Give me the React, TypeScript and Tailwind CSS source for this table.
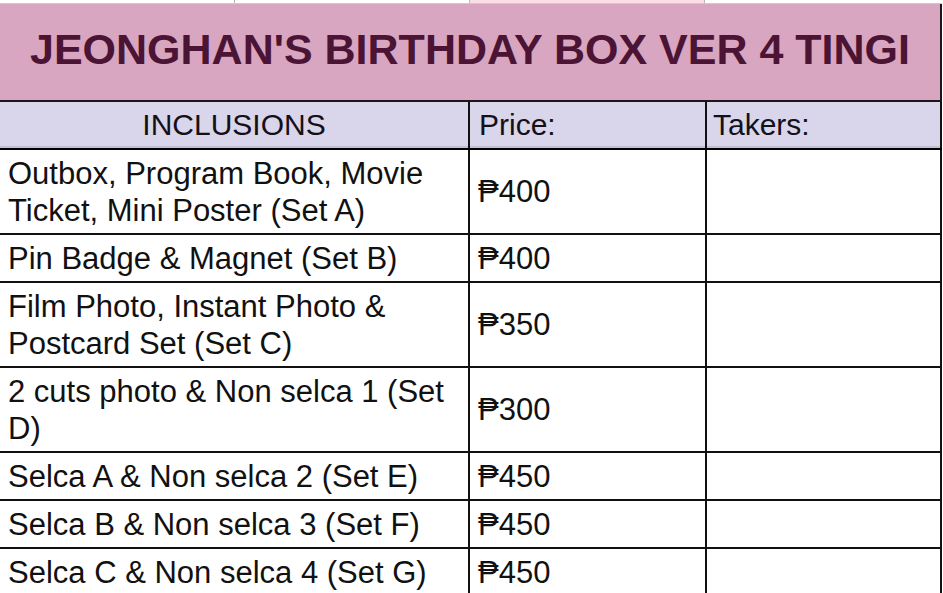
import React from "react";

const rows: { text: React.ReactNode; price: string }[] = [
  { text: <>Outbox, Program Book, Movie<br />Ticket, Mini Poster (Set A)</>, price: "₱400" },
  { text: <>Pin Badge &amp; Magnet (Set B)</>, price: "₱400" },
  { text: <>Film Photo, Instant Photo &amp;<br />Postcard Set (Set C)</>, price: "₱350" },
  { text: <>2 cuts photo &amp; Non selca 1 (Set<br />D)</>, price: "₱300" },
  { text: <>Selca A &amp; Non selca 2 (Set E)</>, price: "₱450" },
  { text: <>Selca B &amp; Non selca 3 (Set F)</>, price: "₱450" },
  { text: <>Selca C &amp; Non selca 4 (Set G)</>, price: "₱450" },
];

export default function App() {
  return (
    <div
      className="w-[943px] h-[593px] overflow-hidden bg-white text-[#111]"
      style={{ fontFamily: '"Liberation Sans", Arial, "DejaVu Sans", sans-serif' }}
    >
      {/* top strip of previous row */}
      <div className="flex h-[4px] w-[942px] border-b border-[#d9c3cc]">
        <div className="w-[235px] border-r border-[#bdb3b8] bg-white" />
        <div className="w-[235px] border-r border-[#bdb3b8] bg-white" />
        <div className="w-[235px] border-r border-[#bdb3b8] bg-[#fbdde5]" />
        <div className="flex-1 bg-white" />
      </div>

      {/* title band */}
      <div className="flex h-[98px] w-[942px] items-center justify-center border-b-2 border-r-2 border-[#1c1418] bg-[#d8a6c0] pb-[6px]">
        <span className="text-[43px] font-bold leading-none text-[#4b1434]">
          JEONGHAN'S BIRTHDAY BOX VER 4 TINGI
        </span>
      </div>

      {/* header row */}
      <div className="flex h-[48px] w-[942px] border-b-2 border-black bg-[#d9d5ea] shadow-[inset_0_-2px_0_#c3c0d2] text-[30px] leading-none text-[#141018]">
        <div className="flex w-[470px] items-center justify-center border-r-2 border-[#111]">
          INCLUSIONS
        </div>
        <div className="flex w-[237px] items-center border-r-2 border-[#111] pl-[9px]">
          Price:
        </div>
        <div className="flex w-[235px] items-center border-r-2 border-[#111] pl-[6px]">
          Takers:
        </div>
      </div>

      {/* body rows */}
      {rows.map((r, i) => (
        <div key={i} className="flex w-[942px] border-b-2 border-[#111] text-[31px] leading-[37px]">
          <div className="w-[470px] border-r-2 border-[#111] pl-[8px] pt-[5px] pb-[4px]">{r.text}</div>
          <div className="flex w-[237px] items-center border-r-2 border-[#111] pl-[8px]">{r.price}</div>
          <div className="w-[235px] border-r-2 border-[#111]" />
        </div>
      ))}
    </div>
  );
}
